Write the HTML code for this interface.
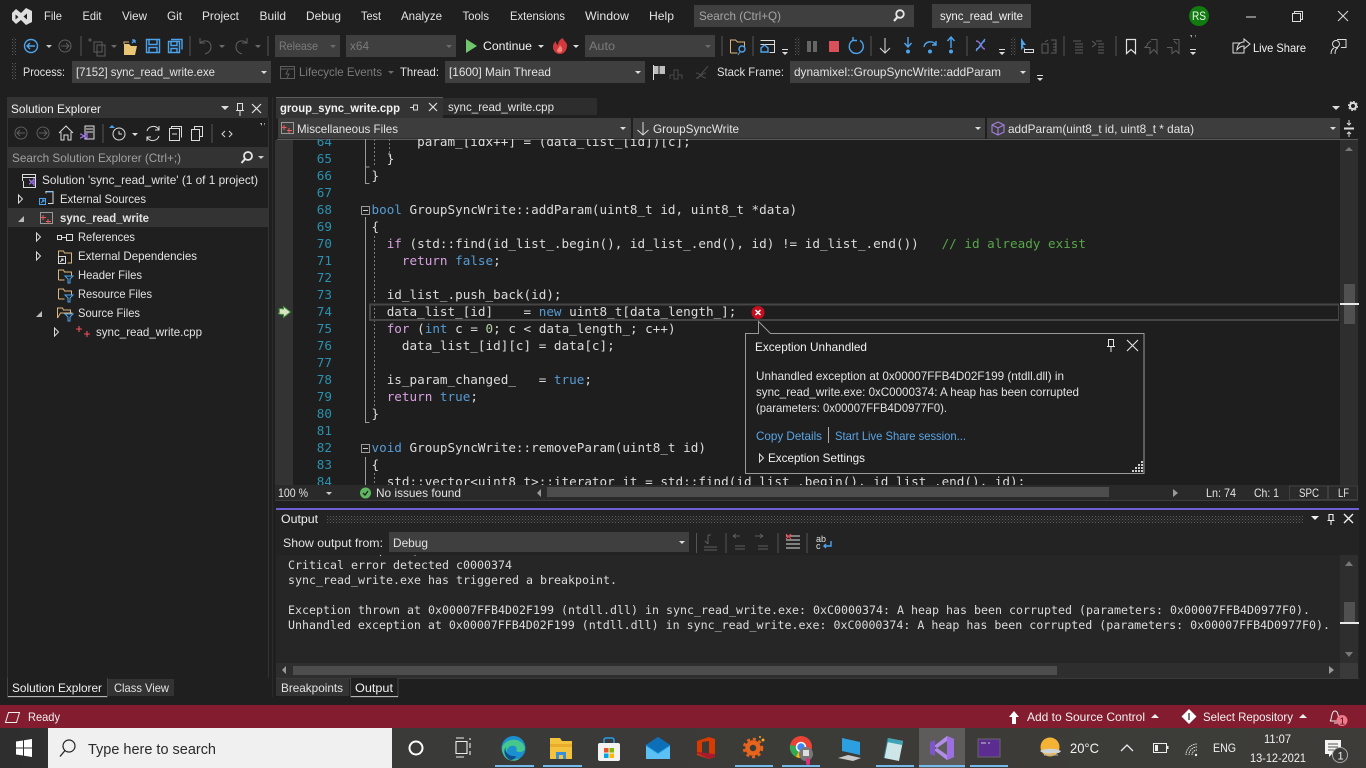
<!DOCTYPE html>
<html><head><meta charset="utf-8"><title>sync_read_write</title>
<style>
html,body{margin:0;padding:0;background:#1f1f1f;overflow:hidden}
svg{display:block}
text{font-family:"Liberation Sans",sans-serif;font-size:12px;fill:#e2e2e2;white-space:pre}
.d{fill:#7b7b7b}
.w{fill:#f1f1f1}
.m{font-family:"DejaVu Sans Mono",monospace;font-size:12.63px;fill:#dcdcdc}
.o{font-family:"DejaVu Sans Mono",monospace;font-size:11.63px;fill:#dcdcdc}
.ln{font-family:"DejaVu Sans Mono",monospace;font-size:12.63px;fill:#2b91af;text-anchor:end}
.k{fill:#569cd6}.c{fill:#d8a0df}.g{fill:#57a64a}.n{fill:#b5cea8}
.l{fill:#5aa5e6}
.s{fill:none;stroke:#dcdcdc;stroke-width:1}
.dim{fill:none;stroke:#5e5e5e;stroke-width:1}
.b{fill:none;stroke:#4da3ec;stroke-width:1.4}
</style></head><body>
<svg width="1366" height="768" viewBox="0 0 1366 768" xmlns="http://www.w3.org/2000/svg">
<defs>
<pattern id="dots" width="3" height="3" patternUnits="userSpaceOnUse"><rect width="1" height="1" fill="#5c5c5c"/><rect x="1.5" y="1.5" width="1" height="1" fill="#4a4a4a"/></pattern>
<clipPath id="ed"><rect x="277" y="139" width="1062" height="346"/></clipPath>
<linearGradient id="tb" x1="0" x2="1" y1="0" y2="0"><stop offset="0" stop-color="#2e2e2e"/><stop offset=".3" stop-color="#3a3a38"/><stop offset="1" stop-color="#3d3c38"/></linearGradient>
</defs>
<rect width="1366" height="768" fill="#1f1f1f"/>

<!-- logo -->
<path fill-rule="evenodd" fill="#dedede" d="M12 13L16 9 21 13 26 8 32 11V22L26 25 21 20 16 24 12 20ZM15.500 14.500v5l3-2.500zM23.500 16.500l3.500 3v-6z"/>
<!-- menu -->
<text x="44" y="20" textLength="18" lengthAdjust="spacingAndGlyphs">File</text>
<text x="82.5" y="20" textLength="19" lengthAdjust="spacingAndGlyphs">Edit</text>
<text x="122" y="20" textLength="25" lengthAdjust="spacingAndGlyphs">View</text>
<text x="167" y="20" textLength="15" lengthAdjust="spacingAndGlyphs">Git</text>
<text x="202" y="20" textLength="37" lengthAdjust="spacingAndGlyphs">Project</text>
<text x="259.500" y="20" textLength="26.500" lengthAdjust="spacingAndGlyphs">Build</text>
<text x="306" y="20" textLength="35" lengthAdjust="spacingAndGlyphs">Debug</text>
<text x="361" y="20" textLength="20" lengthAdjust="spacingAndGlyphs">Test</text>
<text x="401" y="20" textLength="41" lengthAdjust="spacingAndGlyphs">Analyze</text>
<text x="462.500" y="20" textLength="26.500" lengthAdjust="spacingAndGlyphs">Tools</text>
<text x="510" y="20" textLength="55" lengthAdjust="spacingAndGlyphs">Extensions</text>
<text x="585" y="20" textLength="44" lengthAdjust="spacingAndGlyphs">Window</text>
<text x="649" y="20" textLength="25" lengthAdjust="spacingAndGlyphs">Help</text>
<rect x="694" y="5" width="220" height="22" fill="#3f3f3f"/>
<text x="699" y="20" textLength="82" lengthAdjust="spacingAndGlyphs" style="fill:#a5a5a5">Search (Ctrl+Q)</text>
<circle cx="900" cy="14" r="3.8" fill="none" stroke="#e6e6e6" stroke-width="1.8"/><path d="M897.500 17l-3.500 4" stroke="#e6e6e6" stroke-width="2.200"/>
<rect x="932" y="4" width="99" height="24" fill="#3f3f3f"/>
<text x="940" y="20" textLength="83" lengthAdjust="spacingAndGlyphs" class="w">sync_read_write</text>
<circle cx="1199" cy="16" r="10" fill="#107c10"/><text x="1192" y="20" textLength="14" lengthAdjust="spacingAndGlyphs" class="w">RS</text>
<path d="M1246 17h10" stroke="#e0e0e0"/><path class="s" d="M1292.500 13.500h8v8h-8zM1294.500 13.500v-2h8v8h-2"/><path class="s" d="M1338 11l10 10M1348 11l-10 10"/>

<!-- toolbar row 1 -->
<rect x="12" y="37" width="4" height="18" fill="url(#dots)"/>
<circle cx="31" cy="46" r="6.500" class="b"/><path class="b" d="M35 46h-8M30 43l-3 3 3 3"/>
<path d="M46 45h6l-3 3z" fill="#c8c8c8"/>
<circle cx="65" cy="46" r="6" class="dim"/><path class="dim" d="M61 46h8M66 43l3 3-3 3"/>
<path d="M81 36v20" stroke="#555"/>
<path class="dim" d="M94 42h8v10h-8zM97 45h8v11h-8zM90 38v4M88 40h4"/><path d="M111 45h6l-3 3z" fill="#6c6c6c"/>
<path d="M124 44h5l2 2h6l-2 9h-11z" fill="#e8c676"/><path d="M124 44v-2h5" stroke="#dcb67a" fill="none"/><path d="M132 43l3-3 M135 40h-3M135 40v3" stroke="#4da3ec" stroke-width="1.300" fill="none"/>
<path class="b" d="M146.500 39.500h13v13h-13zM149 39.500v5h8v-5M149 52.500v-5h8v5"/>
<path class="b" d="M168.500 41.500h11v11h-11zM171 41.500v4h6v-4M171 52.500v-4h6v4M171 39.500h11v10"/>
<path d="M190 36v20" stroke="#555"/>
<path class="dim" d="M200 38v5h5M200 43c5-4 11-2 11 4 0 4-3 6-6 7"/><path d="M219 45h6l-3 3z" fill="#6c6c6c"/>
<path class="dim" d="M247 38v5h-5M247 43c-5-4-11-2-11 4 0 4 3 6 6 7"/><path d="M255 45h6l-3 3z" fill="#6c6c6c"/>
<path d="M268 36v20" stroke="#555"/>
<rect x="275" y="35" width="65" height="22" fill="#3f3f3f"/><text x="279" y="50" textLength="39" lengthAdjust="spacingAndGlyphs" class="d">Release</text><path d="M330 45h6l-3 3z" fill="#6c6c6c"/>
<rect x="346" y="35" width="110" height="22" fill="#3f3f3f"/><text x="350" y="50" textLength="19" lengthAdjust="spacingAndGlyphs" class="d">x64</text><path d="M446 45h6l-3 3z" fill="#6c6c6c"/>
<path d="M466 39l11 7-11 7z" fill="#6fc66b"/>
<text x="483" y="50" textLength="49" lengthAdjust="spacingAndGlyphs" class="w">Continue</text><path d="M538 45h6l-3 3z" fill="#dcdcdc"/>
<path d="M563 38c0 3 5 4 4 9-1 5-4 7-7 7-4 0-7-3-7-7 0-3 1-4 3-6 0 2 0 3 2 4 0-3 2-6 5-7z" fill="#d2383c"/><path d="M560 45c1 2 3 3 2 6-1 2-4 2-5 0 0-2 2-3 3-6z" fill="#f0877e"/>
<path d="M573 45h6l-3 3z" fill="#dcdcdc"/>
<rect x="585" y="35" width="130" height="22" fill="#3f3f3f"/><text x="589" y="50" textLength="26" lengthAdjust="spacingAndGlyphs" class="d">Auto</text><path d="M705 45h6l-3 3z" fill="#6c6c6c"/>
<path d="M722 36v20" stroke="#555"/>
<path d="M730.500 53v-13h5l2 2h7v5M730.500 53h7" fill="none" stroke="#dcb67a"/><circle cx="742" cy="49" r="3" class="b" stroke-width="1"/><path d="M740 52l-2 3" stroke="#4da3ec"/>
<path d="M753 36v20" stroke="#555"/>
<path class="s" d="M760.500 40.500h14v12h-5M760.500 44.500h14"/><path class="b" d="M761 52v-4l3.500-3 3.500 3v4z"/>
<path d="M782 52h6l-3 3z M782 49h6v1h-6z" fill="#dcdcdc"/>
<rect x="795" y="37" width="5" height="18" fill="url(#dots)"/>
<rect x="807" y="41" width="4" height="11" fill="#666"/><rect x="813" y="41" width="4" height="11" fill="#666"/>
<rect x="829" y="41" width="10" height="11" fill="#d9505a"/>
<path class="b" d="M860 40.500a7 7 0 1 1-6.500-.5M853 37v3.500h4"/>
<path d="M871 36v20" stroke="#555"/>
<path class="s" d="M885 38v15M880 48l5 5 5-5"/>
<path class="b" d="M908 37v10M904.500 43l3.500 4 3.500-4"/><circle cx="908" cy="51.500" r="2" fill="#4da3ec"/>
<path class="b" d="M924 47c1-6 9-7 12-2M936 41v4h-4"/><circle cx="930" cy="51.500" r="2" fill="#4da3ec"/>
<path class="b" d="M951 48v-10M947.500 41l3.500-4 3.500 4"/><circle cx="951" cy="51.500" r="2" fill="#4da3ec"/>
<path d="M967 36v20" stroke="#555"/>
<path d="M976 41c5 0 5 8 9 8M976 49c5 0 5-8 9-8" fill="none" stroke="#8f6fd8" stroke-width="1.400"/><path d="M985 39l-9 12" stroke="#4da3ec" stroke-width="1.200"/>
<path d="M999 52h6l-3 3z M999 49h6v1h-6z" fill="#dcdcdc"/>
<rect x="1011" y="37" width="5" height="18" fill="url(#dots)"/>
<path d="M1021 38v12l3-3 1 2h-1v0z" fill="#4da3ec"/><path d="M1021 38l5 7h-5z" fill="#4da3ec"/><rect x="1024.500" y="49.500" width="9" height="3" fill="none" stroke="#dcdcdc"/>
<path class="dim" d="M1042 44h6v9h-6zM1051 40h5v13h-5M1053 44h3M1053 47h3M1053 50h3M1045 42l3-2"/>
<path d="M1064 36v20" stroke="#555"/>
<path class="dim" d="M1073 41h8M1075 44h8M1075 47h8M1075 50h8M1075 53h8"/>
<path class="dim" d="M1092 41l4 3-4 3M1096 41h6M1098 44h6M1098 47h6M1098 50h6M1098 53h6"/>
<path d="M1116 36v20" stroke="#555"/>
<path d="M1126.500 39.500h9v14l-4.500-4-4.500 4z" fill="none" stroke="#e0e0e0" stroke-width="1.200"/>
<path class="dim" d="M1151 39.500h6v14l-3-4-4 4v-6h-5l3-3M1147 44l4-3"/>
<path class="dim" d="M1173 39.500h6v14l-3-3-4 3v-6h-5M1174 41l3 3"/>
<path d="M1190 35l2 3 0-3zM1195 35l1 3 0-3z" fill="#aaa"/><path d="M1190 52h6l-3 3z M1190 49h6v1h-6z" fill="#dcdcdc"/>
<path class="s" d="M1241 44h-7v10h11v-5M1238 51c0-5 3-8 7-8v-3l6 5-6 5v-3c-3 0-5 1-7 4z" transform="translate(-1,-1)"/>
<text x="1253" y="52" textLength="53" lengthAdjust="spacingAndGlyphs" class="w">Live Share</text>
<path class="s" d="M1337 39.500h9v8h-5M1335 54c0-3 1-6 3-6M1331 54c0-3 1-5 3-6"/><circle cx="1336" cy="44" r="3.500" class="s"/>

<!-- row 2 -->
<rect x="12" y="63" width="4" height="17" fill="url(#dots)"/>
<text x="23" y="76" textLength="42" lengthAdjust="spacingAndGlyphs">Process:</text>
<rect x="72" y="61" width="199" height="22" fill="#3f3f3f"/><text x="76" y="76" textLength="139" lengthAdjust="spacingAndGlyphs">[7152] sync_read_write.exe</text><path d="M261 71h6l-3 3z" fill="#dcdcdc"/>
<rect x="280.500" y="66.500" width="14" height="12" class="dim"/><path class="dim" d="M280 69h14M288 70l-2 4h3l-2 4"/>
<text x="299" y="76" textLength="83" lengthAdjust="spacingAndGlyphs" class="d">Lifecycle Events</text><path d="M388 71h6l-3 3z" fill="#6c6c6c"/>
<text x="400" y="76" textLength="39" lengthAdjust="spacingAndGlyphs">Thread:</text>
<rect x="445" y="61" width="200" height="22" fill="#3f3f3f"/><text x="449" y="76" textLength="102" lengthAdjust="spacingAndGlyphs">[1600] Main Thread</text><path d="M635 71h6l-3 3z" fill="#dcdcdc"/>
<path d="M653.500 65v15" stroke="#dcdcdc"/><path d="M654 66h11v8h-11z" fill="#bdbdbd"/><path d="M659 66v8" stroke="#1f1f1f"/>
<path d="M674 79v-9h4v9zM678 75h4v4M670 79v-4h4" fill="none" stroke="#4a4a4a"/>
<path d="M696 73c5 0 5 5 10 5M696 78c5 0 5-5 10-5" fill="none" stroke="#4a4a4a"/><path d="M708 66l-11 13" stroke="#4a4a4a"/>
<text x="717" y="76" textLength="67" lengthAdjust="spacingAndGlyphs">Stack Frame:</text>
<rect x="790" y="61" width="240" height="22" fill="#3f3f3f"/><text x="794" y="76" textLength="207" lengthAdjust="spacingAndGlyphs">dynamixel::GroupSyncWrite::addParam</text><path d="M1020 71h6l-3 3z" fill="#dcdcdc"/>
<path d="M1037 78h6l-3 3z M1037 75h6v1h-6z" fill="#dcdcdc"/>

<!-- Solution Explorer -->
<rect x="7" y="97" width="261" height="21" fill="#333"/>
<text x="11" y="113" textLength="90" lengthAdjust="spacingAndGlyphs" class="w">Solution Explorer</text>
<path d="M221 106h8l-4 4z" fill="#dcdcdc"/>
<path d="M237.500 103.500h5v7h-5zM236 110.500h8M240 111v5" fill="none" stroke="#e0e0e0"/>
<path d="M252 104l9 9M261 104l-9 9" stroke="#e0e0e0" stroke-width="1.200"/>
<rect x="7" y="118" width="261" height="560" fill="#1f1f1f"/>
<path d="M7.500 118v560M268.500 118v560" stroke="#333"/>
<circle cx="21" cy="133" r="6" class="dim"/><path class="dim" d="M25 133h-8M20 130l-3 3 3 3"/>
<circle cx="43" cy="133" r="6" class="dim"/><path class="dim" d="M39 133h8M44 130l3 3-3 3"/>
<path class="s" d="M59 133l7-7 7 7M61 132v8h3v-5h4v5h3v-8"/>
<rect x="85" y="126" width="9" height="13" fill="#2b2b2b" stroke="#dcdcdc"/><path d="M86 129h7M86 132h7" stroke="#dcdcdc"/><path d="M80 134c3 0 4 4 7 4M80 138c3 0 4-4 7-4M87 132v8" fill="none" stroke="#9a6fe0" stroke-width="1.300"/>
<path d="M103 124v19" stroke="#555"/>
<circle cx="119" cy="134" r="6" class="s"/><path class="s" d="M119 131v3h3"/><path d="M112 124l3 3h-6z" fill="#4da3ec" transform="translate(0,1)"/><path d="M132 133h6l-3 3z" fill="#dcdcdc"/>
<path class="s" d="M147 131a6.500 6.500 0 0 1 12-1M159 126v4h-4M159 136a6.500 6.500 0 0 1-12 1M147 141v-4h4"/>
<path class="s" d="M169.500 128.500h10v12h-10zM171.500 128.500v-2h10v11M172 134h5"/>
<path class="s" d="M191.500 129.500h8v11h-8zM194.500 129.500v-3h8v10h-3"/>
<path d="M212 124v19" stroke="#555"/>
<path class="s" d="M225 131l-3 3 3 3M229 131l3 3-3 3"/>
<path d="M260 123l2 3v-3zM264 123l1 3v-3z" fill="#bbb"/>
<rect x="7" y="147" width="261" height="21" fill="#333"/>
<text x="12" y="162" textLength="169" lengthAdjust="spacingAndGlyphs" style="fill:#a0a0a0">Search Solution Explorer (Ctrl+;)</text>
<circle cx="248" cy="156" r="4" fill="none" stroke="#e6e6e6" stroke-width="1.800"/><path d="M245 159l-3.500 4" stroke="#e6e6e6" stroke-width="2"/>
<path d="M258 156h6l-3 3z" fill="#ccc"/>

<rect x="8" y="208" width="260" height="19" fill="#333"/>
<path class="s" d="M22.500 181v-6.500h13v13h-12v-6.500M22.500 177.500h13"/><path d="M29 180c2 0 3 4 5 4M29 184c2 0 3-4 5-4M34 178v8" fill="none" stroke="#9a6fe0" stroke-width="1.400"/>
<text x="42" y="184" textLength="216" lengthAdjust="spacingAndGlyphs">Solution 'sync_read_write' (1 of 1 project)</text>
<path class="s" d="M18.500 195v8l4-4z"/>
<path d="M46 193.500v-2h7v12h-5" fill="none" stroke="#dcdcdc"/><rect x="39.500" y="198.500" width="6" height="6" fill="none" stroke="#4da3ec"/><path d="M41 203l3-3M42 200h2v2" stroke="#4da3ec" fill="none"/><path d="M47 192h6" stroke="#4da3ec"/>
<text x="60" y="203" textLength="86" lengthAdjust="spacingAndGlyphs">External Sources</text>
<path d="M18 222h6v-6z" fill="#bbb"/>
<rect x="40.500" y="212.500" width="12" height="11" fill="none" stroke="#9a9a9a"/><path d="M43 215v5M41 217.500h5M48 219v5M46 221.500h5" stroke="#f05b5b"/>
<text x="60" y="222" textLength="89" lengthAdjust="spacingAndGlyphs" style="font-weight:bold">sync_read_write</text>
<path class="s" d="M36.500 233v8l4-4z"/>
<rect x="57.500" y="235.500" width="4" height="4" class="s"/><path class="s" d="M61 237.500h5"/><rect x="66.500" y="234.500" width="6" height="6" class="s"/>
<text x="78" y="241" textLength="57" lengthAdjust="spacingAndGlyphs">References</text>
<path class="s" d="M36.500 252v8l4-4z"/>
<path d="M58.500 262v-11h5l1 2h7v10h-4" fill="none" stroke="#dcb67a"/><rect x="58.500" y="256.500" width="7" height="7" fill="#1f1f1f" stroke="#dcdcdc"/><path d="M60 262l3-3M61 259h2v2" stroke="#dcdcdc" fill="none"/>
<text x="78" y="260" textLength="119" lengthAdjust="spacingAndGlyphs">External Dependencies</text>
<path d="M58.500 280v-10h5l1 2h7v4M58.500 280h6" fill="none" stroke="#dcb67a"/><path d="M65 276h8l-3 3v4h-2v-4z" fill="#1f1f1f" stroke="#4da3ec"/>
<text x="78" y="279" textLength="64" lengthAdjust="spacingAndGlyphs">Header Files</text>
<path d="M58.500 299v-10h5l1 2h7v4M58.500 299h6" fill="none" stroke="#dcb67a"/><path d="M65 295h8l-3 3v4h-2v-4z" fill="#1f1f1f" stroke="#4da3ec"/>
<text x="78" y="298" textLength="74" lengthAdjust="spacingAndGlyphs">Resource Files</text>
<path d="M36 317h6v-6z" fill="#bbb"/>
<path d="M57.500 318v-10h5l1 2h7v3M57.500 318l3-5h12" fill="none" stroke="#dcb67a"/><path d="M65 314h8l-3 3v4h-2v-4z" fill="#1f1f1f" stroke="#4da3ec"/>
<text x="78" y="317" textLength="62" lengthAdjust="spacingAndGlyphs">Source Files</text>
<path class="s" d="M54.500 328v8l4-4z"/>
<path d="M79 326v6M76 329h6M87 331v6M84 334h6" stroke="#f0505a" stroke-width="1.100"/>
<text x="96" y="336" textLength="106" lengthAdjust="spacingAndGlyphs">sync_read_write.cpp</text>

<rect x="7" y="678" width="100" height="20" fill="#1f1f1f"/><path d="M7.500 678v19h100v-19" fill="none" stroke="#444"/><path d="M8 696.500h99" stroke="#b5b5b5"/>
<text x="12" y="692" textLength="90" lengthAdjust="spacingAndGlyphs" class="w">Solution Explorer</text>
<rect x="108" y="679" width="66" height="17" fill="#333"/><text x="114" y="692" textLength="55" lengthAdjust="spacingAndGlyphs">Class View</text>

<!-- Editor tabs -->
<path d="M272.500 97v600" stroke="#2b2b2b"/>
<rect x="276" y="97" width="167" height="22" fill="#333"/><rect x="276" y="97" width="167" height="1" fill="#5a5a5a"/>
<text x="280" y="112" textLength="120" lengthAdjust="spacingAndGlyphs" class="w" style="font-weight:bold">group_sync_write.cpp</text>
<path d="M410 107.500h3M413.500 105v5h4v-5zM414 110" fill="none" stroke="#dcdcdc"/>
<path d="M429 103l8 8M437 103l-8 8" stroke="#e0e0e0" stroke-width="1.200"/>
<rect x="443" y="98" width="154" height="17" fill="#2d2d2d"/>
<text x="448" y="111" textLength="106" lengthAdjust="spacingAndGlyphs">sync_read_write.cpp</text>
<path d="M1332 106h8l-4 4z" fill="#dcdcdc"/>
<circle cx="1353" cy="106" r="3" fill="none" stroke="#ddd" stroke-width="2"/><circle cx="1353" cy="106" r="4.500" fill="none" stroke="#ddd" stroke-width="1" stroke-dasharray="2 1.500"/>
<!-- nav -->
<rect x="277" y="118" width="1081" height="20.500" fill="#1f1f1f"/>
<rect x="278" y="118" width="353" height="20.500" fill="#3d3d3d"/>
<rect x="633" y="118" width="352" height="20.500" fill="#3d3d3d"/>
<rect x="987" y="118" width="353" height="20.500" fill="#3d3d3d"/>
<path d="M277 139.500h1081" stroke="#5a5a5a"/>
<rect x="281.500" y="122.500" width="12" height="11" fill="none" stroke="#9a9a9a"/><path d="M284 125v5M281.500 127.500h5M289 128v5M287 130.500h5" stroke="#f05b5b"/>
<text x="297" y="133" textLength="101" lengthAdjust="spacingAndGlyphs">Miscellaneous Files</text><path d="M620 127h6l-3 3z" fill="#dcdcdc"/>
<path class="s" d="M643 122v13M637.500 130l5.500 5 5.500-5"/>
<text x="653" y="133" textLength="86" lengthAdjust="spacingAndGlyphs">GroupSyncWrite</text><path d="M975 127h6l-3 3z" fill="#dcdcdc"/>
<path d="M992 125l6-3 6 3v7l-6 3-6-3zM992 125l6 3 6-3M998 128v7" fill="none" stroke="#a57fe0" stroke-width="1.100"/>
<text x="1008" y="133" textLength="186" lengthAdjust="spacingAndGlyphs">addParam(uint8_t id, uint8_t * data)</text><path d="M1330 127h6l-3 3z" fill="#dcdcdc"/>
<path class="s" d="M1344 129h10M1344 128h10M1349 120v5M1347 123l2 2 2-2M1349 132v5M1347 134l2-2 2 2"/>

<!-- Editor -->
<rect x="275" y="140" width="1065" height="345" fill="#1e1e1e"/>
<rect x="275" y="140" width="18" height="345" fill="#333"/>
<path d="M271.500 140v537" stroke="#1f1f1f"/>
<rect x="1340" y="140" width="18" height="345" fill="#2e2e2e"/>
<path d="M1345 151l4-4 4 4z" fill="#777"/>
<rect x="1344" y="284" width="11" height="40" fill="#505050"/>
<rect x="1340" y="303" width="19" height="2" fill="#e8e8e8"/>
<g clip-path="url(#ed)">
<text class="ln" x="332" y="146">64</text><text class="ln" x="332" y="163">65</text><text class="ln" x="332" y="180">66</text><text class="ln" x="332" y="197">67</text><text class="ln" x="332" y="214">68</text><text class="ln" x="332" y="231">69</text><text class="ln" x="332" y="248">70</text><text class="ln" x="332" y="265">71</text><text class="ln" x="332" y="282">72</text><text class="ln" x="332" y="299">73</text><text class="ln" x="332" y="316">74</text><text class="ln" x="332" y="333">75</text><text class="ln" x="332" y="350">76</text><text class="ln" x="332" y="367">77</text><text class="ln" x="332" y="384">78</text><text class="ln" x="332" y="401">79</text><text class="ln" x="332" y="418">80</text><text class="ln" x="332" y="435">81</text><text class="ln" x="332" y="452">82</text><text class="ln" x="332" y="469">83</text><text class="ln" x="332" y="486">84</text>
<path d="M365.500 139v44.500h4M365.500 167h4M365.500 217v205.500h4M365.500 457v30" fill="none" stroke="#9a9a9a"/>
<path d="M374.500 139v26M389.500 139v20M374.500 236v170M374.500 473v14" fill="none" stroke="#7a7a7a" stroke-dasharray="2 2"/>
<rect x="361.500" y="206.500" width="8" height="8" fill="#1e1e1e" stroke="#9a9a9a"/><path d="M363 210.500h5" stroke="#ccc"/>
<rect x="361.500" y="444.500" width="8" height="8" fill="#1e1e1e" stroke="#9a9a9a"/><path d="M363 448.500h5" stroke="#ccc"/>
<rect x="370" y="304.500" width="969" height="15.500" fill="none" stroke="#464646" stroke-width="2"/>
<text class="m" x="371.500" y="146">      param_[idx++] = (data_list_[id])[c];</text>
<text class="m" x="371.500" y="163">  }</text>
<text class="m" x="371.500" y="180">}</text>
<text class="m" x="371.500" y="214"><tspan class="k">bool</tspan> GroupSyncWrite::addParam(uint8_t id, uint8_t *data)</text>
<text class="m" x="371.500" y="231">{</text>
<text class="m" x="371.500" y="248">  <tspan class="c">if</tspan> (std::find(id_list_.begin(), id_list_.end(), id) != id_list_.end())   <tspan class="g">// id already exist</tspan></text>
<text class="m" x="371.500" y="265">    <tspan class="c">return</tspan> <tspan class="k">false</tspan>;</text>
<text class="m" x="371.500" y="299">  id_list_.push_back(id);</text>
<text class="m" x="371.500" y="316">  data_list_[id]    = <tspan class="k">new</tspan> uint8_t[data_length_];</text>
<text class="m" x="371.500" y="333">  <tspan class="c">for</tspan> (<tspan class="k">int</tspan> c = <tspan class="n">0</tspan>; c &lt; data_length_; c++)</text>
<text class="m" x="371.500" y="350">    data_list_[id][c] = data[c];</text>
<text class="m" x="371.500" y="384">  is_param_changed_   = <tspan class="k">true</tspan>;</text>
<text class="m" x="371.500" y="401">  <tspan class="c">return</tspan> <tspan class="k">true</tspan>;</text>
<text class="m" x="371.500" y="418">}</text>
<text class="m" x="371.500" y="452"><tspan class="k">void</tspan> GroupSyncWrite::removeParam(uint8_t id)</text>
<text class="m" x="371.500" y="469">{</text>
<text class="m" x="371.500" y="486">  std::vector&lt;uint8_t&gt;::iterator it = std::find(id_list_.begin(), id_list_.end(), id);</text>
</g>
<!-- IP arrow -->
<path d="M279 309c2-1 3 0 4.500 0v-2.500l7 5.500-7 5.500v-3c-2 0-4 0-5-1 1-1 1-3 .5-4.500z" fill="#d8e4c0" stroke="#3f8f3f" stroke-width="1"/>
<!-- error -->
<circle cx="758" cy="312.500" r="6.500" fill="#c50f1f"/><path d="M755.500 310l5 5M760.500 310l-5 5" stroke="#fff" stroke-width="1.500"/>
<!-- popup -->
<path d="M745.500 333.500h13v-12l12 12h373.500v140h-398.500z" fill="#1f1f1f" stroke="#9a9a9a"/>
<text x="755" y="351" textLength="112" lengthAdjust="spacingAndGlyphs" class="w">Exception Unhandled</text>
<path d="M1108.500 339.500h5v7h-5zM1107 346.500h8M1111 347v5" fill="none" stroke="#e6e6e6"/>
<path d="M1127 340l11 11M1138 340l-11 11" stroke="#e6e6e6" stroke-width="1.100"/>
<text x="756" y="380" textLength="308" lengthAdjust="spacingAndGlyphs">Unhandled exception at 0x00007FFB4D02F199 (ntdll.dll) in</text>
<text x="756" y="396" textLength="323" lengthAdjust="spacingAndGlyphs">sync_read_write.exe: 0xC0000374: A heap has been corrupted</text>
<text x="756" y="412" textLength="191" lengthAdjust="spacingAndGlyphs">(parameters: 0x00007FFB4D0977F0).</text>
<text x="756" y="440" textLength="66" lengthAdjust="spacingAndGlyphs" class="l">Copy Details</text>
<path d="M828.500 427v16" stroke="#aaa"/>
<text x="835" y="440" textLength="131" lengthAdjust="spacingAndGlyphs" class="l">Start Live Share session...</text>
<path class="s" d="M759.500 454v8l4-4z"/>
<text x="768" y="462" textLength="97" lengthAdjust="spacingAndGlyphs" class="w">Exception Settings</text>
<path d="M1141 462h2v2h-2zM1138 465h2v2h-2zM1141 465h2v2h-2zM1135 468h2v2h-2zM1138 468h2v2h-2zM1141 468h2v2h-2zM1132 471h2v2h-2zM1135 471h2v2h-2zM1138 471h2v2h-2zM1141 471h2v2h-2z" fill="#cfcfcf" transform="translate(0,-1)"/>

<!-- editor bottom bar -->
<rect x="275" y="485" width="1083" height="15" fill="#2a2a2a"/><path d="M275 500.500h1083" stroke="#3c3c3c"/>
<text x="278" y="497" textLength="30" lengthAdjust="spacingAndGlyphs">100 %</text><path d="M326 492h6l-3 3z" fill="#ccc"/>
<circle cx="365.500" cy="493" r="5.500" fill="#5fb85f"/><path d="M363 493l2 2 3-4" fill="none" stroke="#1f1f1f" stroke-width="1.300"/>
<text x="376" y="497" textLength="85" lengthAdjust="spacingAndGlyphs">No issues found</text>
<path d="M541 489v8l-4-4z" fill="#999"/>
<rect x="547" y="487" width="562" height="10" fill="#4d4d4d"/>
<path d="M1173 489v8l5-4z" fill="#999"/>
<text x="1206" y="497" textLength="30" lengthAdjust="spacingAndGlyphs">Ln: 74</text>
<text x="1254" y="497" textLength="25" lengthAdjust="spacingAndGlyphs">Ch: 1</text>
<rect x="1289.500" y="486" width="38" height="13.500" fill="none" stroke="#3f3f3f"/><text x="1299" y="497" textLength="20" lengthAdjust="spacingAndGlyphs">SPC</text>
<rect x="1328.500" y="486" width="29" height="13.500" fill="none" stroke="#3f3f3f"/><text x="1338" y="497" textLength="11" lengthAdjust="spacingAndGlyphs">LF</text>

<!-- Output -->
<rect x="276" y="510" width="1083" height="168" fill="#232323"/>
<rect x="276" y="508" width="1083" height="2" fill="#6c5fd8"/>
<text x="281" y="523" textLength="37" lengthAdjust="spacingAndGlyphs" class="w">Output</text>
<rect x="327" y="516" width="976" height="7" fill="url(#dots)"/>
<path d="M1311 516h8l-4 4z" fill="#eee"/>
<path d="M1329 514.500h4v6h-4zM1327.500 520.500h7M1331 521v4" fill="none" stroke="#eee" stroke-width="1.100"/>
<path d="M1344 514l9 9M1353 514l-9 9" stroke="#eee" stroke-width="1.400"/>
<text x="283" y="547" textLength="100" lengthAdjust="spacingAndGlyphs">Show output from:</text>
<rect x="389" y="532" width="300" height="20" fill="#3f3f3f"/><text x="393" y="547" textLength="35" lengthAdjust="spacingAndGlyphs">Debug</text><path d="M679 541h6l-3 3z" fill="#dcdcdc"/>
<path d="M696.500 533v20" stroke="#555"/>
<path class="dim" d="M704 550h13M704 547h13M708 544v-9M708 535h3M705 541l3 3"/>
<path d="M726 533v20" stroke="#555"/>
<path class="dim" d="M733 536h7M733 536l3-2M733 536l3 2M735 546h10M735 549h10"/>
<path class="dim" d="M755 536h8M763 536l-3-2M763 536l-3 2M758 546h10M758 549h10"/>
<path d="M778 533v20" stroke="#555"/>
<path d="M786 536h14M786 540h14M786 544h14M786 548h14" stroke="#dcdcdc"/><path d="M786 534l5 5M791 534l-5 5" stroke="#e8404a" stroke-width="1.200"/>
<path d="M807 533v20" stroke="#555"/>
<text x="816" y="542" textLength="10" lengthAdjust="spacingAndGlyphs" style="font-size:9px">ab</text><text x="816" y="549" style="font-size:9px">c</text>
<path class="b" d="M831 541v5h-7M826 544l-2 2 2 2" stroke-width="1"/>

<rect x="276" y="555" width="1064" height="108" fill="#262626"/>
<path d="M380 555l1 1M415 555v1" stroke="#bbb"/>
<text class="o" x="288" y="569">Critical error detected c0000374</text>
<text class="o" x="288" y="584">sync_read_write.exe has triggered a breakpoint.</text>
<text class="o" x="288" y="614" textLength="1022" lengthAdjust="spacing">Exception thrown at 0x00007FFB4D02F199 (ntdll.dll) in sync_read_write.exe: 0xC0000374: A heap has been corrupted (parameters: 0x00007FFB4D0977F0).</text>
<text class="o" x="288" y="629" textLength="1042" lengthAdjust="spacing">Unhandled exception at 0x00007FFB4D02F199 (ntdll.dll) in sync_read_write.exe: 0xC0000374: A heap has been corrupted (parameters: 0x00007FFB4D0977F0).</text>
<rect x="1340" y="555" width="18" height="108" fill="#2e2e2e"/>
<path d="M1345 566l4-5 4 5z" fill="#777"/><path d="M1345 652l4 5 4-5z" fill="#777"/>
<rect x="1344" y="602" width="11" height="20" fill="#505050"/>
<rect x="1340" y="622" width="19" height="2" fill="#e8e8e8"/>
<rect x="276" y="663" width="1064" height="15" fill="#2e2e2e"/>
<rect x="1340" y="663" width="18" height="15" fill="#3a3a3a"/>
<path d="M286 666v8l-4-4z" fill="#999"/>
<rect x="293" y="666" width="764" height="9" fill="#4d4d4d"/>
<path d="M1329 666v8l5-4z" fill="#999"/>
<path d="M276 678.500h1083" stroke="#3a3a3a"/>
<rect x="276" y="679" width="73" height="17" fill="#333"/><text x="281" y="692" textLength="62" lengthAdjust="spacingAndGlyphs">Breakpoints</text>
<path d="M350.500 678v19h47.500v-19" fill="#1f1f1f" stroke="#444"/><path d="M351 696.500h47" stroke="#b5b5b5"/>
<text x="355" y="692" textLength="38" lengthAdjust="spacingAndGlyphs" class="w">Output</text>

<!-- Status bar -->
<rect x="0" y="705" width="1366" height="23" fill="#821c2e"/>
<path d="M5.500 722.500l3-10h11l-3 10z" fill="none" stroke="#eee"/>
<text x="28" y="721" textLength="32" lengthAdjust="spacingAndGlyphs" class="w">Ready</text>
<path d="M1014 711l5 6h-3v7h-4v-7h-3z" fill="#fff"/>
<text x="1027" y="721" textLength="118" lengthAdjust="spacingAndGlyphs" class="w">Add to Source Control</text>
<path d="M1151 718h8l-4-4z" fill="#eee"/>
<path d="M1189 709l7.500 7.500-7.500 7.500-7.500-7.500z" fill="#fff"/><path d="M1189 713v7" stroke="#222" stroke-width="1.200"/>
<text x="1203" y="721" textLength="90" lengthAdjust="spacingAndGlyphs" class="w">Select Repository</text>
<path d="M1299 718h8l-4-4z" fill="#eee"/>
<path d="M1330 721c2-1 1-10 5-10 4 0 3 9 5 10zM1334 723h3" fill="none" stroke="#eee"/>
<circle cx="1342" cy="720.500" r="5.500" fill="#f0798a"/><text x="1339.500" y="724.500" style="font-size:10px;fill:#4a1020">1</text>

<!-- Taskbar -->
<rect x="0" y="728" width="1366" height="40" fill="url(#tb)"/>
<path d="M16 741.500l7-1v7h-7zM24 740.300l8-1.300v8.500h-8zM16 748.500h7v7l-7-1zM24 748.500h8v8.500l-8-1.200z" fill="#fff"/>
<rect x="48" y="728" width="344" height="40" fill="#f0f0f0"/>
<circle cx="69" cy="746" r="6" fill="none" stroke="#222" stroke-width="1.200"/><path d="M65 750.500l-5 6" stroke="#222" stroke-width="1.300"/>
<text x="88" y="754" textLength="128" lengthAdjust="spacingAndGlyphs" style="font-size:14.500px;fill:#2a2a2a">Type here to search</text>
<circle cx="416" cy="748" r="6.500" fill="none" stroke="#fff" stroke-width="2"/>
<path d="M456 741.500h11v12h-11zM456 738h8M456 757h8M470 738v2M470 743v5M470 751v4" fill="none" stroke="#eee" stroke-width="1.100"/>
<circle cx="513.500" cy="748" r="12" fill="#1b8fcf"/><path d="M502 748c2-10 20-12 23 0 0 4-6 5-9 3 3-4-3-7-7-4-4 3-3 11 3 12 3 1 6 0 8-1-3 4-10 3-13 1-3-2-5-6-5-11z" fill="#46c88d"/><path d="M510 760c-6-3-7-10-4-13-2 5 3 10 10 9-1 3-3 4-6 4z" fill="#0c4f8c"/>
<path d="M550 738h10l2 3h10v18h-22z" fill="#f3c33e"/><path d="M550 744h22v3h-22z" fill="#e9ad2b"/><path d="M556 759v-7h10v7h-3v-4h-4v4z" fill="#3a8ed6"/>
<path d="M600 743h18a2 2 0 0 1 2 2v14a2 2 0 0 1-2 2h-18a2 2 0 0 1-2-2v-14a2 2 0 0 1 2-2z" fill="#f2f2f2"/><path d="M604 743v-3a2 2 0 0 1 2-2h6a2 2 0 0 1 2 2v3" fill="none" stroke="#26a0e8" stroke-width="1.500"/>
<rect x="604" y="748" width="4.500" height="4.500" fill="#e8532d"/><rect x="609.500" y="748" width="4.500" height="4.500" fill="#7fba00"/><rect x="604" y="753.500" width="4.500" height="4.500" fill="#00a4ef"/><rect x="609.500" y="753.500" width="4.500" height="4.500" fill="#ffb900"/>
<path d="M646 745l12-8 12 8v14h-24z" fill="#1b9de2"/><path d="M646 745l12 8 12-8v-0l-12-8z" fill="#0d6fb8"/><path d="M646 759v-13l12 8 12-8v13z" fill="#5cc0f5"/>
<path d="M697 741l12-4 6 2v18l-6 2-12-4zM702 742v13l7 1v-15z" fill="#d83b01" fill-rule="evenodd"/><path d="M697 753l12 6 6-2v-3l-18-2z" fill="#a81b2c"/>
<circle cx="753" cy="748" r="5.500" fill="none" stroke="#e8641c" stroke-width="4.500"/><circle cx="753" cy="748" r="9" fill="none" stroke="#e8641c" stroke-width="2.500" stroke-dasharray="3 3"/><circle cx="763" cy="740" r="1.500" fill="#f5a623"/><circle cx="760" cy="737" r="1" fill="#f5a623"/>
<circle cx="801" cy="747" r="11" fill="#ea4335"/><path d="M801 747l-11-2a11 11 0 0 0 6 12z" fill="#34a853"/><path d="M801 747l10 3a11 11 0 0 1-15 7z" fill="#fbbc05"/><circle cx="801" cy="747" r="4.500" fill="#4285f4" stroke="#fff" stroke-width="1.500"/>
<circle cx="806" cy="754" r="7" fill="#777"/><path d="M803 750h6v6h-6z" fill="#ddd"/><rect x="806" y="758" width="4" height="7" rx="2" fill="#e0307c"/>
<path d="M842 738l18 4v13l-18-4z" fill="#2b9fe0"/><path d="M838 758l10-3 13 3-8 3z" fill="#c9c9c9"/>
<path d="M888 738l15 3-4 20-15-3z" fill="#cfe6e8"/><path d="M888 738l15 3-1 4-15-3z" fill="#3fa3b8"/><path d="M884 758l4-20" stroke="#2f7f90"/>
<rect x="919" y="728" width="46" height="40" fill="#5d5c5a"/>
<path d="M947 736l7 3v18l-7 3-13-10 3-2 10 7v-14l-10 7-3-2z" fill="#b18ce8"/><path d="M930 742l5-2v16l-5-2z" fill="#7d55c7"/><path d="M947 736l7 3v18l-7 3z" fill="#9b6fe0"/>
<rect x="978" y="739" width="22" height="18" fill="#5b2d91" stroke="#666"/><path d="M981 743h5M988 743h2" stroke="#ccc" stroke-width="1"/>
<path d="M735 766h38M782 766h38M876 766h38M919 766h46M970 766h38M495 766h39M543 766h39" stroke="#76b9ed" stroke-width="2"/>
<circle cx="1050" cy="747" r="9.500" fill="#f5b335"/><path d="M1040 751c4-3 16-3 21 0-2 3-5 2-8 2-4 1-9 1-13-2z" fill="#cfd4da"/><path d="M1044 755h14" stroke="#aeb4ba"/>
<text x="1070" y="753" textLength="29" lengthAdjust="spacingAndGlyphs" style="font-size:14px;fill:#f1f1f1">20°C</text>
<path d="M1121 751l6-6 6 6" fill="none" stroke="#eee" stroke-width="1.300"/>
<rect x="1153.500" y="743.500" width="13" height="9" fill="none" stroke="#eee"/><rect x="1155" y="745" width="3" height="6" fill="#eee"/><rect x="1167" y="746" width="1.500" height="3" fill="#eee"/>
<path d="M1186 755a11 11 0 0 1 11-11M1189 755a8 8 0 0 1 8-8M1192 755a5 5 0 0 1 5-5" fill="none" stroke="#ddd" stroke-dasharray="1.500 .7"/><circle cx="1196" cy="755" r="1.200" fill="#eee"/>
<text x="1213" y="752" textLength="23" lengthAdjust="spacingAndGlyphs" class="w">ENG</text>
<text x="1264" y="743" textLength="27" lengthAdjust="spacingAndGlyphs" class="w">11:07</text>
<text x="1250" y="762" textLength="56" lengthAdjust="spacingAndGlyphs" class="w">13-12-2021</text>
<path d="M1325 740h16v14h-9l-3 3v-3h-4z" fill="#f4f4f4"/><path d="M1328 744h10M1328 747h10M1328 750h7" stroke="#555"/>
<circle cx="1340" cy="755" r="7.500" fill="#3a3a38" stroke="#aaa"/><text x="1337.500" y="759.500" style="font-size:11px;fill:#eee">1</text>
</svg>
</body></html>
